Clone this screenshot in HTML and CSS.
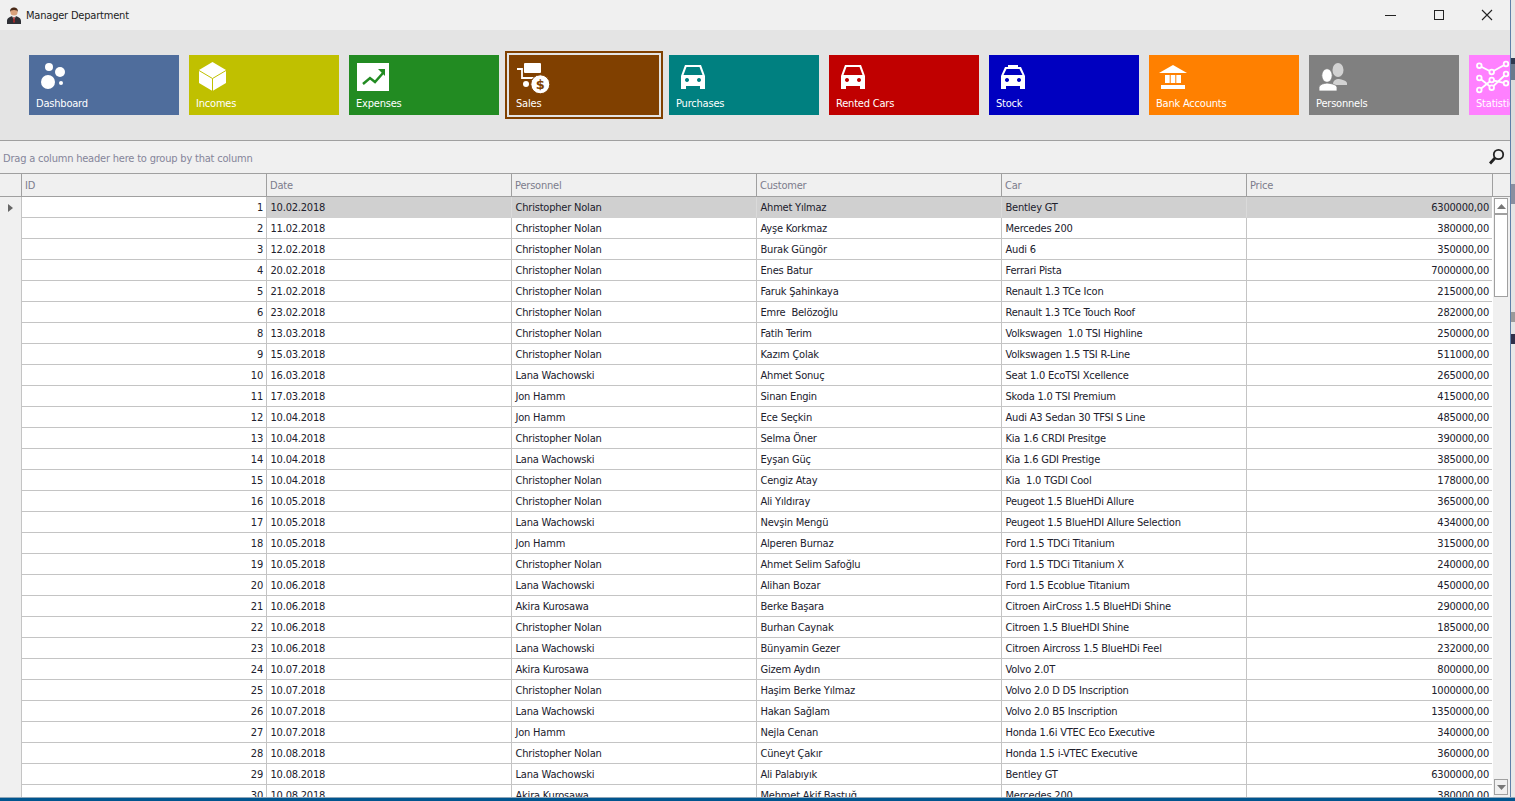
FILE: index.html
```html
<!DOCTYPE html>
<html lang="tr">
<head>
<meta charset="utf-8">
<title>Manager Department</title>
<link rel="stylesheet" href="styles.css">
</head>
<body>
<div class="desk">
<main class="window">
  <header class="titlebar">
    <svg class="app-icon" width="16" height="17" viewBox="0 0 16 17"><path fill="#2f3036" d="M1 17v-3c0-3 3-4 5-5h4c2 1 5 2 5 5v3z"/><path fill="#efeee9" d="M6 9l2 4 2-4z"/><path fill="#a3282a" d="M7.4 10h1.2l.4 5-1 1-1-1z"/><circle cx="8" cy="5" r="3.6" fill="#d9a27c"/><path fill="#4a2a17" d="M4.2 5C3.8 1.500 6 .5 8 .5s4.200 1 3.800 4.500L11 3.500 8 3 5 3.500z"/></svg>
    <span class="app-title">Manager Department</span>
    <div class="controls">
      <svg class="ctl" width="48" height="30" viewBox="0 0 48 30"><path d="M19 15.500h11" stroke="#222" fill="none"/></svg>
      <svg class="ctl" width="48" height="30" viewBox="0 0 48 30"><rect x="20.500" y="10.500" width="9" height="9" stroke="#222" fill="none"/></svg>
      <svg class="ctl" width="48" height="30" viewBox="0 0 48 30"><path d="M20 10l10 10M30 10L20 20" stroke="#222" fill="none" stroke-width="1.100"/></svg>
    </div>
  </header>

  <nav class="ribbon">
    <a class="tile t-dash"><svg width="50" height="40" viewBox="0 0 50 40" fill="#fff"><circle cx="20" cy="12" r="4"/><circle cx="31" cy="17" r="5"/><circle cx="19" cy="27" r="7"/><circle cx="32" cy="28" r="2"/></svg><span>Dashboard</span></a>
    <a class="tile t-inc"><svg width="50" height="40" viewBox="0 0 50 40"><path fill="#fff" d="M23.500 7L37 15v13l-13.500 8L10 28V15z"/><path fill="none" stroke="#c0c000" d="M10 15.500l13.500 8 13.500-8M23.500 23.500V36"/></svg><span>Incomes</span></a>
    <a class="tile t-exp"><svg width="50" height="40" viewBox="0 0 50 40"><rect x="8" y="8" width="32" height="28" fill="#fff"/><path fill="none" stroke="#228b22" stroke-width="2.500" d="M14 29l7-6 5 4 8-9"/><path fill="#228b22" d="M29 14h7v7z"/></svg><span>Expenses</span></a>
    <a class="tile t-sales"><svg width="50" height="40" viewBox="0 0 50 40"><rect x="15" y="8" width="17" height="10" rx="1" fill="#fff"/><path fill="none" stroke="#fff" stroke-width="1.800" d="M8 14h5v9h12"/><circle cx="17" cy="29" r="3" fill="#fff"/><circle cx="31.300" cy="29.300" r="9.500" fill="#fff" stroke="#804000" stroke-width="1"/><text class="dollar" x="31.300" y="33.500" text-anchor="middle">$</text></svg><span>Sales</span></a>
    <a class="tile t-pur"><svg width="50" height="40" viewBox="0 0 50 40"><path fill="#fff" fill-rule="evenodd" d="M16 10h16l4 11v13h-5v-3H17v3h-5V21zM17.500 12l-3 8h19l-3-8zM18 23a2 2 0 1 0 .01 0zM30 23a2 2 0 1 0 .01 0z"/></svg><span>Purchases</span></a>
    <a class="tile t-rent"><svg width="50" height="40" viewBox="0 0 50 40"><path fill="#fff" fill-rule="evenodd" d="M16 10h16l4 11v13h-5v-3H17v3h-5V21zM17.500 12l-3 8h19l-3-8zM18 23a2 2 0 1 0 .01 0zM30 23a2 2 0 1 0 .01 0z"/></svg><span>Rented Cars</span></a>
    <a class="tile t-stock"><svg width="50" height="40" viewBox="0 0 50 40"><path fill="#fff" fill-rule="evenodd" d="M19 10h10v2h3l4 9v13h-5v-3H17v3h-5V21l4-9h3zM17.500 14l-3 6h19l-3-6zM18 23a2 2 0 1 0 .01 0zM30 23a2 2 0 1 0 .01 0z"/></svg><span>Stock</span></a>
    <a class="tile t-bank"><svg width="50" height="40" viewBox="0 0 50 40" fill="#fff"><path d="M24 10l14 8H10z"/><rect x="16" y="20" width="4.700" height="8"/><rect x="21.700" y="20" width="4.600" height="8"/><rect x="27.300" y="20" width="4.700" height="8"/><rect x="12" y="30" width="24" height="4"/></svg><span>Bank Accounts</span></a>
    <a class="tile t-pers"><svg width="50" height="40" viewBox="0 0 50 40"><g fill="#d2d2d2"><ellipse cx="29" cy="15" rx="5.500" ry="7"/><path d="M24 30v-2c1-3 3-4 5-4s8 1 9 4v2z"/></g><g fill="#fff" stroke="#808080" stroke-width=".8"><ellipse cx="18" cy="20.500" rx="5.200" ry="6.800"/><path d="M10 36v-4c1-3 5-3.500 8-4 3 .5 9 1 10 4v4z"/></g></svg><span>Personnels</span></a>
    <a class="tile t-stat"><svg width="50" height="40" viewBox="0 0 50 40"><g fill="none" stroke="#fff" stroke-width="1.800"><path d="M10.300 10.700L22.700 17 37 9M10.300 23l12.400 9.700L37 19M10.300 35l12.400-10L37 28.300"/></g><g fill="#ff80ff" stroke="#fff" stroke-width="1.800"><circle cx="10.300" cy="10.700" r="2.300"/><circle cx="22.700" cy="17" r="2.300"/><circle cx="37" cy="9" r="2.300"/><circle cx="10.300" cy="23" r="2.300"/><circle cx="22.700" cy="25" r="2.300"/><circle cx="37" cy="19" r="2.300"/><circle cx="37" cy="28.300" r="2.300"/><circle cx="10.300" cy="35" r="2.300"/><circle cx="22.700" cy="32.700" r="2.300"/></g></svg><span>Statistics</span></a>
  </nav>

  <div class="group-panel">
    <span class="group-label">Drag a column header here to group by that column</span>
    <svg class="search" width="18" height="18" viewBox="0 0 18 18"><circle cx="10.500" cy="6.500" r="4.700" fill="none" stroke="#222" stroke-width="1.800"/><path d="M7 10L2 15.500" stroke="#222" stroke-width="2.800" fill="none"/></svg>
  </div>

  <div class="grid-head">
    <div class="hcell"></div><div class="hcell">ID</div><div class="hcell">Date</div><div class="hcell">Personnel</div><div class="hcell">Customer</div><div class="hcell">Car</div><div class="hcell">Price</div><div class="hfill"></div>
  </div>

  <div class="grid-body">
    <div class="rows">
      <div class="row sel"><div class="ind"><svg width="5" height="8" viewBox="0 0 5 8"><path d="M0 0l5 4-5 4z" fill="#666"/></svg></div><div class="c n id">1</div><div class="c">10.02.2018</div><div class="c">Christopher Nolan</div><div class="c">Ahmet Yılmaz</div><div class="c">Bentley GT</div><div class="c n last">6300000,00</div></div>
      <div class="row"><div class="ind"></div><div class="c n">2</div><div class="c">11.02.2018</div><div class="c">Christopher Nolan</div><div class="c">Ayşe Korkmaz</div><div class="c">Mercedes 200</div><div class="c n last">380000,00</div></div>
      <div class="row"><div class="ind"></div><div class="c n">3</div><div class="c">12.02.2018</div><div class="c">Christopher Nolan</div><div class="c">Burak Güngör</div><div class="c">Audi 6</div><div class="c n last">350000,00</div></div>
      <div class="row"><div class="ind"></div><div class="c n">4</div><div class="c">20.02.2018</div><div class="c">Christopher Nolan</div><div class="c">Enes Batur</div><div class="c">Ferrari Pista</div><div class="c n last">7000000,00</div></div>
      <div class="row"><div class="ind"></div><div class="c n">5</div><div class="c">21.02.2018</div><div class="c">Christopher Nolan</div><div class="c">Faruk Şahinkaya</div><div class="c">Renault 1.3 TCe Icon</div><div class="c n last">215000,00</div></div>
      <div class="row"><div class="ind"></div><div class="c n">6</div><div class="c">23.02.2018</div><div class="c">Christopher Nolan</div><div class="c">Emre  Belözoğlu</div><div class="c">Renault 1.3 TCe Touch Roof</div><div class="c n last">282000,00</div></div>
      <div class="row"><div class="ind"></div><div class="c n">8</div><div class="c">13.03.2018</div><div class="c">Christopher Nolan</div><div class="c">Fatih Terim</div><div class="c">Volkswagen  1.0 TSI Highline</div><div class="c n last">250000,00</div></div>
      <div class="row"><div class="ind"></div><div class="c n">9</div><div class="c">15.03.2018</div><div class="c">Christopher Nolan</div><div class="c">Kazım Çolak</div><div class="c">Volkswagen 1.5 TSI R-Line</div><div class="c n last">511000,00</div></div>
      <div class="row"><div class="ind"></div><div class="c n">10</div><div class="c">16.03.2018</div><div class="c">Lana Wachowski</div><div class="c">Ahmet Sonuç</div><div class="c">Seat 1.0 EcoTSI Xcellence</div><div class="c n last">265000,00</div></div>
      <div class="row"><div class="ind"></div><div class="c n">11</div><div class="c">17.03.2018</div><div class="c">Jon Hamm</div><div class="c">Sinan Engin</div><div class="c">Skoda 1.0 TSI Premium</div><div class="c n last">415000,00</div></div>
      <div class="row"><div class="ind"></div><div class="c n">12</div><div class="c">10.04.2018</div><div class="c">Jon Hamm</div><div class="c">Ece Seçkin</div><div class="c">Audi A3 Sedan 30 TFSI S Line</div><div class="c n last">485000,00</div></div>
      <div class="row"><div class="ind"></div><div class="c n">13</div><div class="c">10.04.2018</div><div class="c">Christopher Nolan</div><div class="c">Selma Öner</div><div class="c">Kia 1.6 CRDI Presitge</div><div class="c n last">390000,00</div></div>
      <div class="row"><div class="ind"></div><div class="c n">14</div><div class="c">10.04.2018</div><div class="c">Lana Wachowski</div><div class="c">Eyşan Güç</div><div class="c">Kia 1.6 GDI Prestige</div><div class="c n last">385000,00</div></div>
      <div class="row"><div class="ind"></div><div class="c n">15</div><div class="c">10.04.2018</div><div class="c">Christopher Nolan</div><div class="c">Cengiz Atay</div><div class="c">Kia  1.0 TGDI Cool</div><div class="c n last">178000,00</div></div>
      <div class="row"><div class="ind"></div><div class="c n">16</div><div class="c">10.05.2018</div><div class="c">Christopher Nolan</div><div class="c">Ali Yıldıray</div><div class="c">Peugeot 1.5 BlueHDi Allure</div><div class="c n last">365000,00</div></div>
      <div class="row"><div class="ind"></div><div class="c n">17</div><div class="c">10.05.2018</div><div class="c">Lana Wachowski</div><div class="c">Nevşin Mengü</div><div class="c">Peugeot 1.5 BlueHDI Allure Selection</div><div class="c n last">434000,00</div></div>
      <div class="row"><div class="ind"></div><div class="c n">18</div><div class="c">10.05.2018</div><div class="c">Jon Hamm</div><div class="c">Alperen Burnaz</div><div class="c">Ford 1.5 TDCi Titanium</div><div class="c n last">315000,00</div></div>
      <div class="row"><div class="ind"></div><div class="c n">19</div><div class="c">10.05.2018</div><div class="c">Christopher Nolan</div><div class="c">Ahmet Selim Safoğlu</div><div class="c">Ford 1.5 TDCi Titanium X</div><div class="c n last">240000,00</div></div>
      <div class="row"><div class="ind"></div><div class="c n">20</div><div class="c">10.06.2018</div><div class="c">Lana Wachowski</div><div class="c">Alihan Bozar</div><div class="c">Ford 1.5 Ecoblue Titanium</div><div class="c n last">450000,00</div></div>
      <div class="row"><div class="ind"></div><div class="c n">21</div><div class="c">10.06.2018</div><div class="c">Akira Kurosawa</div><div class="c">Berke Başara</div><div class="c">Citroen AirCross 1.5 BlueHDi Shine</div><div class="c n last">290000,00</div></div>
      <div class="row"><div class="ind"></div><div class="c n">22</div><div class="c">10.06.2018</div><div class="c">Christopher Nolan</div><div class="c">Burhan Caynak</div><div class="c">Citroen 1.5 BlueHDI Shine</div><div class="c n last">185000,00</div></div>
      <div class="row"><div class="ind"></div><div class="c n">23</div><div class="c">10.06.2018</div><div class="c">Lana Wachowski</div><div class="c">Bünyamin Gezer</div><div class="c">Citroen Aircross 1.5 BlueHDi Feel</div><div class="c n last">232000,00</div></div>
      <div class="row"><div class="ind"></div><div class="c n">24</div><div class="c">10.07.2018</div><div class="c">Akira Kurosawa</div><div class="c">Gizem Aydın</div><div class="c">Volvo 2.0T</div><div class="c n last">800000,00</div></div>
      <div class="row"><div class="ind"></div><div class="c n">25</div><div class="c">10.07.2018</div><div class="c">Christopher Nolan</div><div class="c">Haşim Berke Yılmaz</div><div class="c">Volvo 2.0 D D5 Inscription</div><div class="c n last">1000000,00</div></div>
      <div class="row"><div class="ind"></div><div class="c n">26</div><div class="c">10.07.2018</div><div class="c">Lana Wachowski</div><div class="c">Hakan Sağlam</div><div class="c">Volvo 2.0 B5 Inscription</div><div class="c n last">1350000,00</div></div>
      <div class="row"><div class="ind"></div><div class="c n">27</div><div class="c">10.07.2018</div><div class="c">Jon Hamm</div><div class="c">Nejla Cenan</div><div class="c">Honda 1.6i VTEC Eco Executive</div><div class="c n last">340000,00</div></div>
      <div class="row"><div class="ind"></div><div class="c n">28</div><div class="c">10.08.2018</div><div class="c">Christopher Nolan</div><div class="c">Cüneyt Çakır</div><div class="c">Honda 1.5 i-VTEC Executive</div><div class="c n last">360000,00</div></div>
      <div class="row"><div class="ind"></div><div class="c n">29</div><div class="c">10.08.2018</div><div class="c">Lana Wachowski</div><div class="c">Ali Palabıyık</div><div class="c">Bentley GT</div><div class="c n last">6300000,00</div></div>
      <div class="row"><div class="ind"></div><div class="c n">30</div><div class="c">10.08.2018</div><div class="c">Akira Kurosawa</div><div class="c">Mehmet Akif Baştuğ</div><div class="c">Mercedes 200</div><div class="c n last">380000,00</div></div>
    </div>
    <div class="scrollbar">
      <div class="sb-btn"><svg width="9" height="5" viewBox="0 0 9 5"><path d="M4.500 0L9 5H0z" fill="#777"/></svg></div>
      <div class="sb-thumb"></div>
      <div class="sb-btn sb-down"><svg width="9" height="5" viewBox="0 0 9 5"><path d="M0 0h9L4.500 5z" fill="#777"/></svg></div>
    </div>
  </div>
</main>
<div class="behind"></div>
</div>
<div class="taskbar"></div>
</body>
</html>
```
FILE: styles.css
```css
* { box-sizing: border-box; }
html, body { margin: 0; height: 100%; }
body {
  width: 1515px;
  height: 801px;
  overflow: hidden;
  display: flex;
  flex-direction: column;
  font-family: "DejaVu Sans Condensed", "DejaVu Sans", sans-serif;
  font-stretch: condensed;
  font-size: 11px;
  letter-spacing: -0.2px;
  color: #20202c;
  background: #e8e8e8;
}
.desk { display: flex; height: 797px; }
.window {
  width: 1510px;
  height: 797px;
  display: flex;
  flex-direction: column;
  overflow: hidden;
  background: #f0f0f0;
}
.behind {
  width: 5px;
  border-left: 1.5px solid #5f7fa8;
  background: linear-gradient(#e6e6e6 0 58px, #2e3a50 58px 64px, #6b7a8c 64px 80px, #dcdcdc 80px 184px, #8a8fa0 184px 204px, #e4e4e4 204px 312px, #9a9a9a 312px 322px, #e4e4e4 322px 334px, #30304a 334px 344px, #e8e8e8 344px);
}
.taskbar {
  height: 4px;
  background: #00558f;
  border-top: 1px solid #8fa6b8;
}

.titlebar {
  height: 30px;
  flex: none;
  display: flex;
  align-items: center;
  padding-left: 6px;
  background: #f0f0f0;
  color: #222;
}
.app-icon { margin-right: 4px; }
.controls { margin-left: auto; display: flex; margin-right: 0; }
.ctl { display: block; }

.ribbon {
  height: 110px;
  flex: none;
  display: flex;
  gap: 10px;
  padding: 25px 0 0 29px;
  background: #e4e4e4;
  overflow: hidden;
}
.tile {
  flex: none;
  width: 150px;
  height: 60px;
  color: #fff;
}
.tile svg { display: block; }
.tile span { display: block; padding-left: 7px; line-height: 17px; white-space: nowrap; }
.dollar { font: bold 13px "DejaVu Sans", sans-serif; letter-spacing: 0; fill: #804000; }
.t-dash { background: #4f6d9c; }
.t-inc { background: #c0c000; }
.t-exp { background: #228b22; }
.t-sales { background: #804000; box-shadow: 0 0 0 2px #e4e4e4, 0 0 0 4px #804000; }
.t-pur { background: #008080; }
.t-rent { background: #c00000; }
.t-stock { background: #0000c0; }
.t-bank { background: #ff8000; }
.t-pers { background: #808080; }
.t-stat { background: #ff80ff; }

.group-panel {
  height: 34px;
  flex: none;
  display: flex;
  align-items: center;
  justify-content: space-between;
  padding: 0 4px 0 3px;
  border-top: 1px solid #a0a0a0;
  border-bottom: 1px solid #a0a0a0;
  color: #85859a;
}
.group-label { padding-top: 2px; }

.grid-head {
  height: 23px;
  flex: none;
  display: grid;
  grid-template-columns: 22px repeat(5, 245px) 246px 1fr;
  grid-template-rows: 22px;
  border-bottom: 1px solid #a0a0a0;
  color: #7c7c8c;
}
.hcell {
  border-right: 1px solid #a0a0a0;
  padding: 0 3px;
  line-height: 24px;
}

.grid-body { flex: 1; min-height: 0; display: flex; overflow: hidden; }
.rows { width: 1493px; flex: none; background: #fff; overflow: hidden; }
.row {
  display: grid;
  grid-template-columns: 22px repeat(5, 245px) 245px;
  height: 21px;
}
.ind {
  background: #f0f0f0;
  border-right: 1px solid #c4c4c4;
  display: flex;
  align-items: center;
  padding-left: 8px;
}
.c {
  border-right: 1px solid #c4c4c4;
  border-bottom: 1px solid #c4c4c4;
  padding: 0 3.500px;
  line-height: 22px;
  white-space: pre;
  overflow: hidden;
}
.n { text-align: right; padding-right: 3px; }
.last { border-right: 0; padding-right: 3px; }
.sel .c { background: #d0d0d0; border-bottom-color: #d0d0d0; border-right-color: #dadada; }
.sel .id { background: #fff; border-bottom-color: #c4c4c4; border-right-color: #c4c4c4; }

.scrollbar {
  flex: 1;
  display: flex;
  flex-direction: column;
  padding: 1px 2px 2px 1px;
  background: #f0f0f0;
}
.sb-btn {
  height: 16px;
  flex: none;
  display: flex;
  align-items: center;
  justify-content: center;
  background: #fff;
  border: 1px solid #a0a0a0;
}
.sb-thumb {
  height: 83px;
  flex: none;
  margin-top: 0;
  background: #fff;
  border: 1px solid #a0a0a0;
}
.sb-down { margin-top: auto; background: #f0f0f0; }
```
